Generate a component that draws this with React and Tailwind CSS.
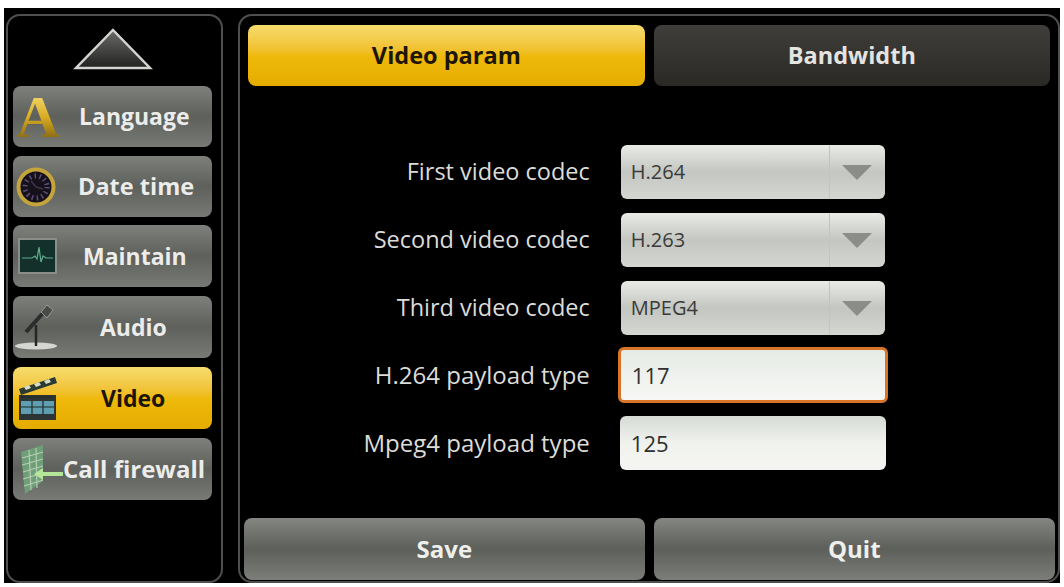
import React from 'react';

const FONT = "font-['Open_Sans','Noto_Sans',sans-serif]";

function LetterIcon() {
  return (
    <span className="block w-[44px] text-center font-['Liberation_Serif',serif] font-bold text-[60px] leading-[52px] bg-gradient-to-b from-[#f6e070] via-[#d9ac22] to-[#7d5f10] bg-clip-text text-transparent">
      A
    </span>
  );
}

function ClockIcon() {
  return (
    <svg width="42" height="42" viewBox="0 0 42 42">
      <circle cx="20" cy="21" r="17.5" fill="#15101a" stroke="#c4a53c" strokeWidth="4" />
      <circle cx="20" cy="21" r="11" fill="none" stroke="#5b4f78" strokeWidth="5" strokeDasharray="1.5 3.5" />
      <path d="M20 21l-5-6M20 21l7 2" stroke="#3d3649" strokeWidth="1.5" />
    </svg>
  );
}

function PulseIcon() {
  return (
    <svg width="39" height="36" viewBox="0 0 39 36">
      <rect x="1" y="1" width="37" height="34" fill="#13302a" stroke="#8b8d88" strokeWidth="2" />
      <path d="M4 20h10l3-2 2 3 2-12 2 15 2-6 3 2h7" fill="none" stroke="#5fae8c" strokeWidth="1.2" />
    </svg>
  );
}

function MicIcon() {
  return (
    <svg width="46" height="50" viewBox="0 0 46 50">
      <ellipse cx="22" cy="44" rx="21" ry="3.5" fill="#d5d6d2" />
      <path d="M22 44V23" stroke="#262626" strokeWidth="2.5" />
      <path d="M12 30L30 10" stroke="#2c2c2c" strokeWidth="4" />
      <path d="M27 10l6-7 6 5-6 8z" fill="#4a4a4a" stroke="#9a9a98" strokeWidth="1" />
    </svg>
  );
}

function ClapperIcon() {
  return (
    <svg width="40" height="44" viewBox="0 0 40 44">
      <path d="M1 13L37 1l2 6L3 19z" fill="#2b3a33" />
      <path d="M6 11l5-2 2 3-5 2zM16 8l5-2 2 3-5 2zM26 5l5-2 2 3-5 2z" fill="#d7dcc8" />
      <rect x="1" y="19" width="37" height="25" fill="#2c3434" />
      <rect x="3" y="25" width="33" height="13" fill="#5f9eb0" />
      <path d="M3 21h33M3 31h33M14 25v13M25 25v13" stroke="#1f2a2c" strokeWidth="1.2" />
    </svg>
  );
}

function WallIcon() {
  return (
    <svg width="44" height="50" viewBox="0 0 44 50">
      <path d="M2 8l22-7v36L6 50z" fill="#6f9f78" />
      <path d="M3 14l21-6M3 21l21-6M4 28l20-6M4 35l20-6M5 42l19-6M10 6l2 40M17 4l1 40" stroke="#b5ccb2" strokeWidth="1.2" />
      <path d="M15 30l9-6v4h20v4H24v4z" fill="#b4e69a" />
    </svg>
  );
}

const menuItems = [
  { label: 'Language', icon: <LetterIcon />, h: 'h-[61px]', iconBox: 'pl-[3px]', textBox: 'pl-[16px] text-[23px]' },
  { label: 'Date time', icon: <ClockIcon />, h: 'h-[61px]', iconBox: 'pl-[3px]', textBox: 'pl-[15px] text-[23.5px]' },
  { label: 'Maintain', icon: <PulseIcon />, h: 'h-[62px] -mt-[1px]', iconBox: 'pl-[5px]', textBox: 'pl-[20px] text-[23px]' },
  { label: 'Audio', icon: <MicIcon />, h: 'h-[62px]', iconBox: 'pl-[1px]', textBox: 'pl-[37px] text-[23px]' },
  { label: 'Video', icon: <ClapperIcon />, h: 'h-[62px]', iconBox: 'pl-[5px]', textBox: 'pl-[38px] text-[23px]', active: true },
  { label: 'Call firewall', icon: <WallIcon />, h: 'h-[62px]', iconBox: 'pl-[6px]', textBox: 'pl-0 text-[24px]' },
];

function MenuButton({ item }) {
  const tone = item.active
    ? 'bg-gradient-to-b from-[#f6dc6c] via-[#efba0c] to-[#e5ac00] text-[#1c1508]'
    : 'bg-gradient-to-b from-[#7e807c] via-[#5e605c] to-[#787a76] text-[#ececea]';
  return (
    <div className={`flex items-center w-[199px] rounded-[8px] ${item.h} ${tone}`}>
      <div className={`w-[50px] shrink-0 ${item.iconBox}`}>{item.icon}</div>
      <div className={`whitespace-nowrap font-bold ${item.textBox}`}>{item.label}</div>
    </div>
  );
}

function BigButton({ label, tone, className }) {
  return (
    <div className={`flex items-center justify-center rounded-[8px] font-bold ${tone} ${className}`}>
      {label}
    </div>
  );
}

const GRAY = 'bg-gradient-to-b from-[#848682] via-[#5d5f5a] to-[#7c7e7a] text-[#efefec]';
const YELLOW = 'bg-gradient-to-b from-[#f6dc6c] via-[#efba0c] to-[#e5ac00] text-[#1c1508]';
const DARK = 'bg-gradient-to-b from-[#403e3b] to-[#2a2926] text-[#e4e4e0]';

function SelectRow({ label, value }) {
  return (
    <div className="flex items-center h-[54px]">
      <div className="w-[381px] pr-[31px] text-right text-[23.5px] text-[#dcdcd8] whitespace-nowrap">{label}</div>
      <div className="flex w-[264px] h-[54px] rounded-[6px] bg-gradient-to-b from-[#e9ebe6] via-[#c4c6c1] to-[#d4d6d1] text-[#3a3b39]">
        <div className="flex-1 flex items-center pl-[10px] text-[20px] border-r border-[#c2c4bf]">{value}</div>
        <div className="w-[55px] flex items-center justify-center">
          <svg width="32" height="18" viewBox="0 0 32 18">
            <path d="M1 2h30L16 17z" fill="#8b8d88" />
          </svg>
        </div>
      </div>
    </div>
  );
}

function InputRow({ label, value, focused }) {
  return (
    <div className={`flex items-center ${focused ? '-mt-[2px]' : '-mt-[1px]'}`}>
      <div className="w-[378px] pr-[28px] text-right text-[24px] text-[#dcdcd8] whitespace-nowrap">{label}</div>
      {focused ? (
        <div className="flex items-center w-[270px] h-[56px] rounded-[6px] border-[3px] border-[#d9752a] bg-gradient-to-b from-[#e6ebe6] to-[#f7f8f5] pl-[11px] text-[22px] text-[#2f302e]">
          {value}
        </div>
      ) : (
        <div className="flex items-center ml-[2px] w-[266px] h-[54px] rounded-[6px] bg-gradient-to-b from-[#d6dbd6] via-[#f0f2ee] to-[#f5f6f3] pl-[11px] text-[22px] text-[#2f302e]">
          {value}
        </div>
      )}
    </div>
  );
}

export default function App() {
  return (
    <div className={`${FONT} w-[1064px] h-[587px] bg-white pt-[8px] pl-[4px]`}>
      <div className="flex w-[1056px] h-[575px] bg-black">
        {/* left menu */}
        <div className="mt-[6px] ml-[2px] w-[217px] rounded-[14px] border-2 border-[#4f4f4d] pl-[5px]">
          <div className="flex justify-center w-[199px] pt-[12px] pb-[16px]">
            <svg width="80" height="42" viewBox="0 0 80 42">
              <defs>
                <linearGradient id="arrow" x1="0" y1="0" x2="0" y2="1">
                  <stop offset="0" stopColor="#6a6a68" />
                  <stop offset="1" stopColor="#222220" />
                </linearGradient>
              </defs>
              <path d="M40 2L77 40H3z" fill="url(#arrow)" stroke="#d4d4d0" strokeWidth="2.5" />
            </svg>
          </div>
          <div className="flex flex-col gap-[9px]">
            {menuItems.map((item) => (
              <MenuButton key={item.label} item={item} />
            ))}
          </div>
        </div>

        {/* right panel */}
        <div className="mt-[6px] ml-[15px] w-[823px] h-[569px] rounded-[14px] border-2 border-[#4f4f4d] flex flex-col">
          <div className="flex gap-[9px] pl-[8px] pt-[9px]">
            <BigButton label="Video param" tone={YELLOW} className="w-[397px] h-[61px] text-[23.5px]" />
            <BigButton label="Bandwidth" tone={DARK} className="w-[396px] h-[61px] text-[23.5px]" />
          </div>
          <div className="flex-1 pt-[59px] flex flex-col gap-[14px]">
            <SelectRow label="First video codec" value="H.264" />
            <SelectRow label="Second video codec" value="H.263" />
            <SelectRow label="Third video codec" value="MPEG4" />
            <InputRow label="H.264 payload type" value="117" focused />
            <InputRow label="Mpeg4 payload type" value="125" />
          </div>
          <div className="flex gap-[9px] pl-[4px] pb-[1px]">
            <BigButton label="Save" tone={GRAY} className="w-[401px] h-[62px] text-[24px]" />
            <BigButton label="Quit" tone={GRAY} className="w-[401px] h-[62px] text-[24px]" />
          </div>
        </div>
      </div>
    </div>
  );
}
